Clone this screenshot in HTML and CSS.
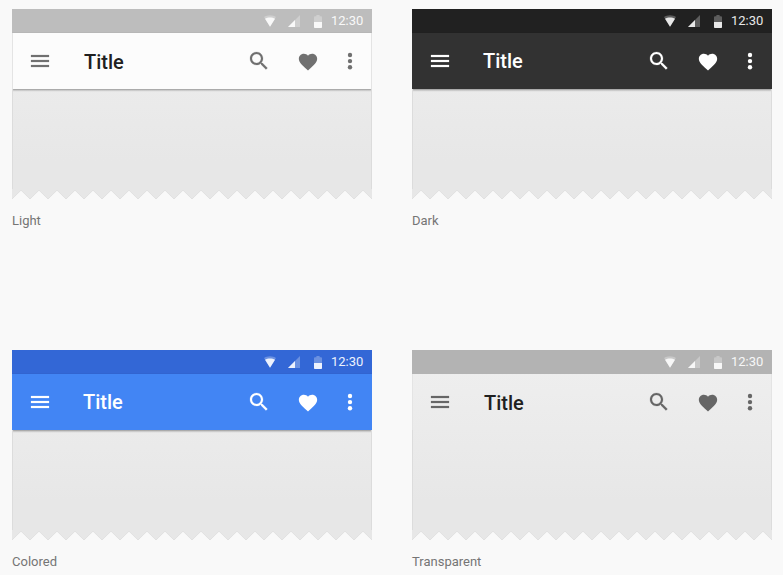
FILE: index.html
```
<!DOCTYPE html>
<html lang="en">
<head>
<meta charset="utf-8">
<title>App bar themes</title>
<link rel="stylesheet" href="styles.css">
</head>
<body>
<svg class="defs" width="0" height="0" aria-hidden="true">
  <symbol id="wifi" viewBox="0 0 12 12"><path opacity=".3" d="M6 .3C3.600 .3 1.500 1 0 2.100L6 11.800 12 2.100C10.500 1 8.400 .3 6 .3Z"/><path d="M6 2.600C4.300 2.600 2.300 3 1 3.800L6 11.800 11 3.800C9.700 3 7.700 2.600 6 2.600Z"/></symbol>
  <symbol id="cell" viewBox="0 0 12 12"><path opacity=".3" d="M0 12 12 0V12Z"/><path d="M0 12 7 5V12Z"/></symbol>
  <symbol id="battery" viewBox="0 0 8 13"><path opacity=".3" d="M0 7V2.200Q0 1.200 1 1.200H2.400V0H5.600V1.200H7Q8 1.200 8 2.200V7Z"/><path d="M0 7H8V12.200Q8 13 7.200 13H.8Q0 13 0 12.200Z"/></symbol>
  <symbol id="menu" viewBox="0 0 24 24"><path d="M3 18h18v-2H3v2zm0-5h18v-2H3v2zm0-7v2h18V6H3z"/></symbol>
  <symbol id="search" viewBox="0 0 24 24"><path d="M15.500 14h-.79l-.28-.27C15.410 12.590 16 11.110 16 9.500 16 5.910 13.090 3 9.500 3S3 5.910 3 9.500 5.910 16 9.500 16c1.610 0 3.090-.59 4.230-1.570l.27.28v.79l5 4.990L20.490 19l-4.990-5zm-6 0C7.010 14 5 11.990 5 9.500S7.010 5 9.500 5 14 7.010 14 9.500 11.990 14 9.500 14z"/></symbol>
  <symbol id="heart" viewBox="0 0 24 24"><path d="M12 21.350l-1.450-1.320C5.400 15.360 2 12.280 2 8.500 2 5.420 4.420 3 7.500 3c1.740 0 3.410.81 4.500 2.090C13.090 3.810 14.760 3 16.500 3 19.580 3 22 5.420 22 8.500c0 3.780-3.400 6.860-8.550 11.540L12 21.350z"/></symbol>
  <symbol id="more" viewBox="0 0 24 24"><circle cx="12" cy="6" r="2.200"/><circle cx="12" cy="12.100" r="2.200"/><circle cx="12" cy="18.200" r="2.200"/></symbol>
  <symbol id="torn" viewBox="0 0 360 10"><path class="torn-fill" d="M0 11V10l9-8.800 9 8.800 9-8.800 9 8.800 9-8.800 9 8.800 9-8.800 9 8.800 9-8.800 9 8.800 9-8.800 9 8.800 9-8.800 9 8.800 9-8.800 9 8.800 9-8.800 9 8.800 9-8.800 9 8.800 9-8.800 9 8.800 9-8.800 9 8.800 9-8.800 9 8.800 9-8.800 9 8.800 9-8.800 9 8.800 9-8.800 9 8.800 9-8.800 9 8.800 9-8.800 9 8.800 9-8.800 9 8.800L351 1.200 360 10V11Z"/></symbol>
</svg>
<main class="grid">
  <figure class="example light">
    <div class="screen">
      <div class="status"><svg class="wifi"><use href="#wifi"/></svg><svg class="cell"><use href="#cell"/></svg><svg class="battery"><use href="#battery"/></svg><span class="time">12:30</span></div>
      <div class="appbar"><svg class="icon menu"><use href="#menu"/></svg><span class="title">Title</span><svg class="icon search"><use href="#search"/></svg><svg class="icon heart"><use href="#heart"/></svg><svg class="icon more"><use href="#more"/></svg></div>
      <div class="content"></div>
      <svg class="torn"><use href="#torn"/></svg>
    </div>
    <figcaption>Light</figcaption>
  </figure>
  <figure class="example dark">
    <div class="screen">
      <div class="status"><svg class="wifi"><use href="#wifi"/></svg><svg class="cell"><use href="#cell"/></svg><svg class="battery"><use href="#battery"/></svg><span class="time">12:30</span></div>
      <div class="appbar"><svg class="icon menu"><use href="#menu"/></svg><span class="title">Title</span><svg class="icon search"><use href="#search"/></svg><svg class="icon heart"><use href="#heart"/></svg><svg class="icon more"><use href="#more"/></svg></div>
      <div class="content"></div>
      <svg class="torn"><use href="#torn"/></svg>
    </div>
    <figcaption>Dark</figcaption>
  </figure>
  <figure class="example colored">
    <div class="screen">
      <div class="status"><svg class="wifi"><use href="#wifi"/></svg><svg class="cell"><use href="#cell"/></svg><svg class="battery"><use href="#battery"/></svg><span class="time">12:30</span></div>
      <div class="appbar"><svg class="icon menu"><use href="#menu"/></svg><span class="title">Title</span><svg class="icon search"><use href="#search"/></svg><svg class="icon heart"><use href="#heart"/></svg><svg class="icon more"><use href="#more"/></svg></div>
      <div class="content"></div>
      <svg class="torn"><use href="#torn"/></svg>
    </div>
    <figcaption>Colored</figcaption>
  </figure>
  <figure class="example transparent">
    <div class="screen">
      <div class="status"><svg class="wifi"><use href="#wifi"/></svg><svg class="cell"><use href="#cell"/></svg><svg class="battery"><use href="#battery"/></svg><span class="time">12:30</span></div>
      <div class="appbar"><svg class="icon menu"><use href="#menu"/></svg><span class="title">Title</span><svg class="icon search"><use href="#search"/></svg><svg class="icon heart"><use href="#heart"/></svg><svg class="icon more"><use href="#more"/></svg></div>
      <div class="content"></div>
      <svg class="torn"><use href="#torn"/></svg>
    </div>
    <figcaption>Transparent</figcaption>
  </figure>
</main>
</body>
</html>
```
FILE: styles.css
```
* { box-sizing: border-box; }

body {
  margin: 0;
  background: #f9f9f9;
  font-family: Roboto, "Liberation Sans", sans-serif;
}

svg { display: block; fill: currentColor; flex: none; }
.defs { height: 0; }

.grid {
  display: grid;
  grid-template-columns: 360px 360px;
  grid-template-rows: 341px auto;
  column-gap: 40px;
  padding: 9px 0 0 12px;
  height: 575px;
  overflow: hidden;
}

.example { margin: 0; }

.screen {
  display: flex;
  flex-direction: column;
  height: 190px;
  overflow: hidden;
  background: linear-gradient(#eeeeee 12%, #e7e7e7 80%);
}

.status {
  display: flex;
  align-items: center;
  height: 24px;
  padding-right: 8px;
  justify-content: flex-end;
  background: var(--status);
  color: var(--status-ink);
}

.wifi { width: 12px; height: 12px; margin-right: 12px; }
.cell { width: 12px; height: 12px; margin-right: 14px; }
.battery { width: 8px; height: 13px; margin-right: 9px; }

.time {
  width: 33px;
  font-size: 13px;
  line-height: 24px;
  white-space: nowrap;
}

.appbar {
  display: flex;
  align-items: center;
  height: 56px;
  padding: 0 10px 0 16px;
  background: var(--bar);
  color: var(--ink);
  box-shadow: var(--shadow);
}

.icon { width: 24px; height: 24px; }
.menu, .search { stroke: currentColor; stroke-width: .2; }

.title {
  flex: 1;
  margin-left: var(--title-gap);
  padding-top: var(--title-drop);
  color: var(--title);
  font-size: 20px;
  font-weight: 500;
  line-height: 24px;
}

.heart { width: 22px; height: 22px; margin: 1px 19px 0 26px; }

.content {
  flex: 1;
  border: solid #dcdcdc;
  border-width: 0 1px;
}

.torn { width: 360px; height: 10px; }
.torn-fill { fill: #f9f9f9; stroke: #d8d8d8; stroke-width: .6; }

figcaption {
  margin-top: 12px;
  color: #757575;
  font-size: 13px;
  line-height: 20px;
}

.light {
  --status: #bdbdbd;
  --status-ink: #f9f9f9;
  --bar: #fcfcfc;
  --ink: #707070;
  --title: #202020;
  --title-gap: 32px;
  --title-drop: 2px;
  --shadow: 0 1px 2px rgba(0, 0, 0, .4);
}

.dark {
  --status: #212121;
  --status-ink: #e8e8e8;
  --bar: #323232;
  --ink: #fff;
  --title: #fff;
  --title-gap: 31px;
  --title-drop: 0;
  --shadow: 0 1px 2px rgba(0, 0, 0, .4);
}

.colored {
  --status: #3367d6;
  --status-ink: #edf2fd;
  --bar: #4285f4;
  --ink: #fff;
  --title: #fff;
  --title-gap: 31px;
  --title-drop: 0;
  --shadow: 0 1px 2px rgba(0, 0, 0, .4);
}

.transparent {
  --status: #b3b3b3;
  --status-ink: #f7f7f7;
  --bar: transparent;
  --ink: #666;
  --title: #202020;
  --title-gap: 32px;
  --title-drop: 2px;
  --shadow: none;
}

.light .appbar,
.transparent .appbar {
  border: solid #e4e4e4;
  border-width: 0 1px;
  padding: 0 9px 0 15px;
}
```
